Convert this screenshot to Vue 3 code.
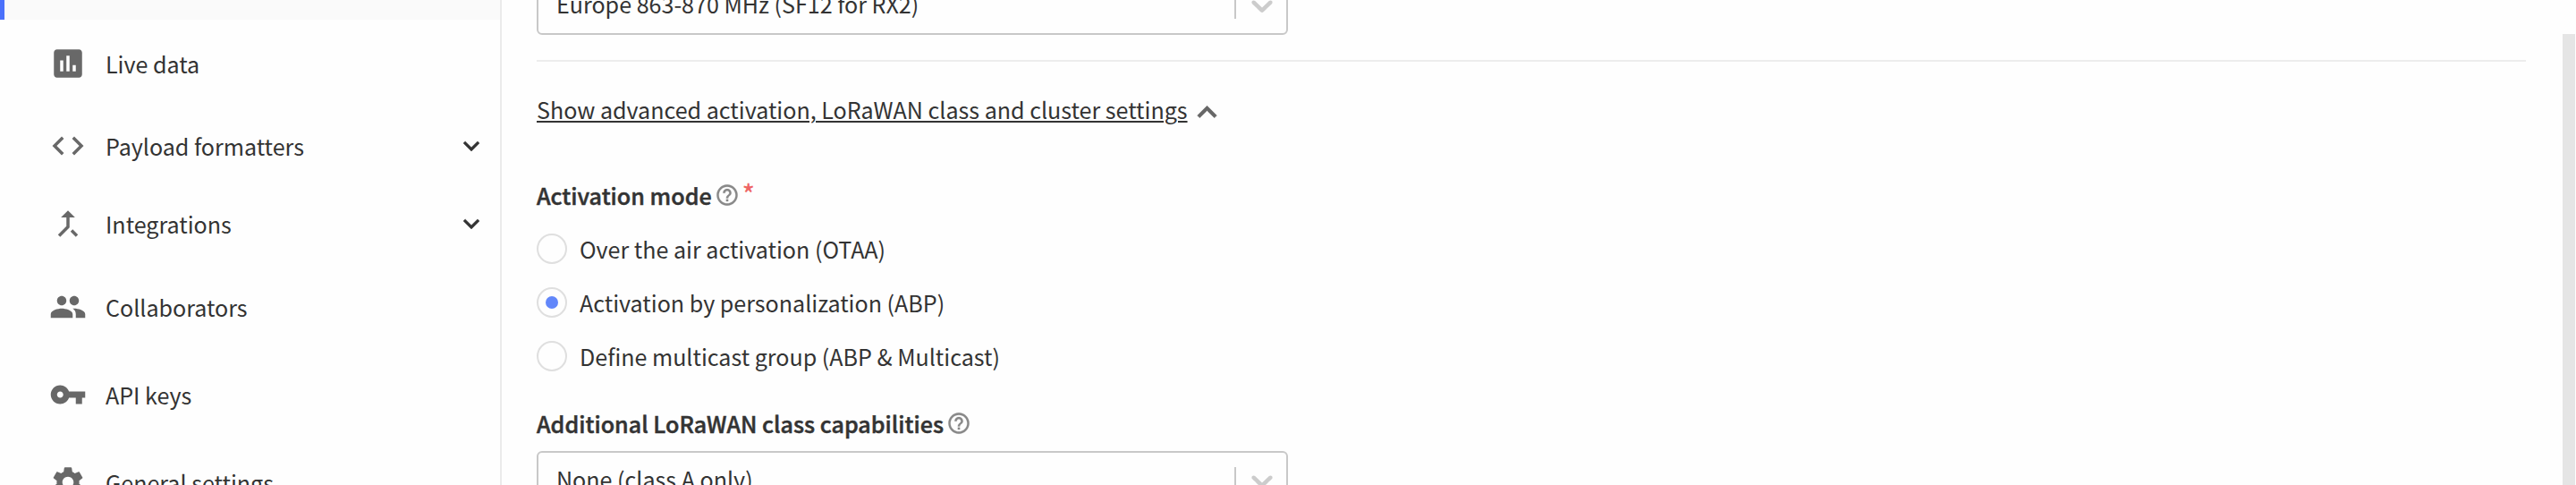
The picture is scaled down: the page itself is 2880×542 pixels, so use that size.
<script setup>
const navItems = [
  { label: 'Live data', size: 'tall', icon: 'M19 3H5c-1.100 0-2 .9-2 2v14c0 1.100.9 2 2 2h14c1.100 0 2-.9 2-2V5c0-1.100-.9-2-2-2zM9 17H7v-7h2v7zm4 0h-2V7h2v10zm4 0h-2v-4h2v4z' },
  { label: 'Payload formatters', size: 'short', expandable: true, icon: 'M9.400 16.600L4.800 12l4.600-4.600L8 6l-6 6 6 6 1.400-1.400zm5.200 0l4.600-4.600-4.600-4.600L16 6l6 6-6 6-1.400-1.400z' },
  { label: 'Integrations', size: 'mid', expandable: true, icon: 'M17 20.410L18.410 19 15 15.590 13.590 17 17 20.410zM7.500 8H11v5.590L5.590 19 7 20.410l6-6V8h3.500L12 3.500 7.500 8z' },
  { label: 'Collaborators', size: 'tall', icon: 'M16 11c1.660 0 2.990-1.340 2.990-3S17.660 5 16 5c-1.660 0-3 1.340-3 3s1.340 3 3 3zm-8 0c1.660 0 2.990-1.340 2.990-3S9.660 5 8 5C6.340 5 5 6.340 5 8s1.340 3 3 3zm0 2c-2.330 0-7 1.170-7 3.500V19h14v-2.500c0-2.330-4.670-3.500-7-3.500zm8 0c-.29 0-.62.02-.97.05 1.160.84 1.970 1.970 1.970 3.450V19h6v-2.500c0-2.330-4.670-3.500-7-3.500z' },
  { label: 'API keys', size: 'tall', icon: 'M12.650 10C11.830 7.670 9.610 6 7 6c-3.310 0-6 2.690-6 6s2.690 6 6 6c2.610 0 4.830-1.670 5.650-4H17v4h4v-4h2v-4H12.650zM7 14c-1.100 0-2-.9-2-2s.9-2 2-2 2 .9 2 2-.9 2-2 2z' },
  { label: 'General settings', size: 'tall', icon: 'M19.140 12.940c.04-.3.060-.61.060-.94 0-.32-.02-.64-.07-.94l2.030-1.580c.18-.14.230-.41.120-.61l-1.920-3.320c-.12-.22-.37-.29-.59-.22l-2.390.960c-.5-.38-1.030-.7-1.620-.94l-.36-2.540c-.04-.24-.24-.41-.48-.41h-3.840c-.24 0-.43.170-.47.410l-.36 2.540c-.59.240-1.130.570-1.620.940l-2.390-.96c-.22-.08-.47 0-.59.220L2.740 8.870c-.12.210-.08.470.120.610l2.030 1.580c-.05.3-.09.630-.09.940s.02.640.070.940l-2.030 1.580c-.18.140-.23.410-.12.610l1.920 3.320c.12.220.370.290.590.220l2.390-.96c.5.380 1.030.7 1.620.940l.36 2.540c.05.240.240.410.480.410h3.840c.24 0 .44-.17.470-.41l.36-2.540c.59-.24 1.130-.56 1.620-.94l2.390.960c.22.080.470 0 .59-.22l1.920-3.320c.12-.22.070-.47-.12-.61l-2.010-1.580zM12 15.600c-1.980 0-3.600-1.620-3.600-3.600s1.620-3.600 3.600-3.600 3.600 1.620 3.600 3.600-1.620 3.600-3.600 3.600z' },
]
const modes = [
  { label: 'Over the air activation (OTAA)', checked: false },
  { label: 'Activation by personalization (ABP)', checked: true },
  { label: 'Define multicast group (ABP & Multicast)', checked: false },
]
const helpPath = 'M11 18h2v-2h-2v2zm1-16C6.480 2 2 6.480 2 12s4.480 10 10 10 10-4.480 10-10S17.520 2 12 2zm0 18c-4.410 0-8-3.590-8-8s3.590-8 8-8 8 3.590 8 8-3.590 8-8 8zm0-14c-2.210 0-4 1.790-4 4h2c0-1.100.9-2 2-2s2 .9 2 2c0 2-3 1.750-3 5h2c0-2.250 3-2.500 3-5 0-2.210-1.790-4-4-4z'
const selectArrow = 'M4.516 7.548c0.436-0.446 1.043-0.481 1.576 0l3.908 3.747 3.908-3.747c0.533-0.481 1.141-0.446 1.574 0 0.436 0.445 0.408 1.197 0 1.615-0.406 0.418-4.695 4.502-4.695 4.502-0.217 0.223-0.502 0.335-0.787 0.335s-0.570-0.112-0.789-0.335c0 0-4.287-4.084-4.695-4.502s-0.436-1.170 0-1.615z'
const arrowDown = 'M7.410 8.590L12 13.170l4.590-4.580L18 10l-6 6-6-6 1.410-1.410z'
const arrowUp = 'M7.410 15.410L12 10.830l4.590 4.580L18 14l-6-6-6 6z'
</script>

<template>
  <div class="page">
    <nav class="sidebar">
      <div class="active-item"></div>
      <a v-for="item in navItems" :key="item.label" class="nav-item" :class="item.size">
        <svg class="nav-icon" viewBox="0 0 24 24"><path :d="item.icon" /></svg>
        <span class="nav-label">{{ item.label }}</span>
        <svg v-if="item.expandable" class="expand" viewBox="0 0 24 24"><path :d="arrowDown" /></svg>
      </a>
    </nav>

    <main class="content">
      <div class="select first">
        <span class="value">Europe 863-870 MHz (SF12 for RX2)</span>
        <span class="separator"></span>
        <svg class="arrow" viewBox="0 0 20 20"><path :d="selectArrow" /></svg>
      </div>
      <hr class="rule" />
      <div class="toggle">
        <span class="toggle-text">Show advanced activation, LoRaWAN class and cluster settings</span>
        <svg class="toggle-icon" viewBox="0 0 24 24"><path :d="arrowUp" /></svg>
      </div>

      <div class="label mode-label">
        <span>Activation mode</span>
        <svg class="help" viewBox="0 0 24 24"><path :d="helpPath" /></svg>
        <span class="required">*</span>
      </div>
      <div class="radios">
        <label v-for="mode in modes" :key="mode.label" class="radio">
          <span class="circle"><span v-if="mode.checked" class="dot"></span></span>
          <span class="radio-text">{{ mode.label }}</span>
        </label>
      </div>

      <div class="label class-label">
        <span>Additional LoRaWAN class capabilities</span>
        <svg class="help" viewBox="0 0 24 24"><path :d="helpPath" /></svg>
      </div>
      <div class="select">
        <span class="value">None (class A only)</span>
        <span class="separator"></span>
        <svg class="arrow" viewBox="0 0 20 20"><path :d="selectArrow" /></svg>
      </div>
    </main>

    <div class="scroll-track"><div class="scroll-thumb"></div></div>
  </div>
</template>

<style>
html, body { overflow: hidden; background: #fefefe; }
</style>

<style scoped>
.page {
  display: flex;
  width: 2880px;
  height: 542px;
  overflow: hidden;
  background: #fefefe;
  color: #333;
  font-family: "Noto Sans CJK SC", "Open Sans", sans-serif;
  font-size: 25.07px;
  line-height: 36px;
  white-space: nowrap;
}
.page * { box-sizing: border-box; }
svg { display: block; flex: none; fill: currentColor; }

.sidebar {
  display: flex;
  flex-direction: column;
  flex: none;
  width: 561px;
  border-right: 2px solid #ebebeb;
}
.active-item {
  flex: none;
  height: 22px;
  border-left: 5px solid #4b71fb;
  background: #fafafa;
}
.nav-item {
  display: flex;
  flex: none;
  align-items: center;
  padding: 0 11px 0 55px;
}
.tall { height: 98px; }
.short { height: 86px; }
.mid { height: 88px; }
.nav-icon { width: 42px; height: 42px; color: #686868; }
.nav-label { flex: 1; margin-left: 21px; }
.expand { width: 36px; height: 36px; margin-right: 3px; stroke: currentColor; stroke-width: 0.3; }

.content {
  display: flex;
  flex-direction: column;
  flex: none;
  width: 2224px;
  margin-left: 39px;
}
.select {
  display: flex;
  flex: none;
  align-items: center;
  width: 840px;
  height: 66px;
  padding-left: 20px;
  border: 2px solid #c8c8c8;
  border-radius: 6px;
}
.first { margin-top: -27px; }
.value { flex: 1; margin-top: -4px; }
.separator { width: 2px; height: 30px; background: #c8c8c8; }
.arrow { width: 40px; height: 40px; margin: 0 7px 0 9px; color: #ccc; }
.rule {
  flex: none;
  width: 100%;
  height: 2px;
  margin: 28px 0 0;
  border: 0;
  background: #ededed;
}
.toggle { display: flex; align-items: center; height: 36px; margin-top: 35px; }
.toggle-text {
  text-decoration: underline;
  text-decoration-thickness: 2px;
  text-underline-offset: 2px;
}
.toggle-icon { width: 43px; height: 43px; margin-top: 7px; color: #676767; stroke: currentColor; stroke-width: 0.4; }
.label {
  display: flex;
  align-items: center;
  height: 36px;
  font-weight: 500;
  letter-spacing: 0.02px;
  -webkit-text-stroke: 0.5px #333;
}
.mode-label { margin-top: 60px; }
.help { width: 28px; height: 28px; margin-left: 3.500px; color: #888; stroke: currentColor; stroke-width: 0.2; }
.required {
  align-self: flex-start;
  margin: -3px 0 0 2.500px;
  color: #ee6464;
  font-size: 29px;
  -webkit-text-stroke: 0;
}
.radios { display: flex; flex-direction: column; margin-top: 12px; }
.radio { display: flex; align-items: center; height: 60px; }
.circle {
  display: grid;
  place-items: center;
  width: 34px;
  height: 34px;
  border: 2px solid #dfdfdf;
  border-radius: 50%;
}
.dot { width: 14px; height: 14px; border-radius: 50%; background: #6287fa; }
.radio-text { margin-left: 14px; }
.class-label { margin: 27px 0 13px; }

.scroll-track { flex: 1; padding: 38px 1px 0 41px; }
.scroll-thumb { height: 504px; background: #e5e5e5; }
</style>
